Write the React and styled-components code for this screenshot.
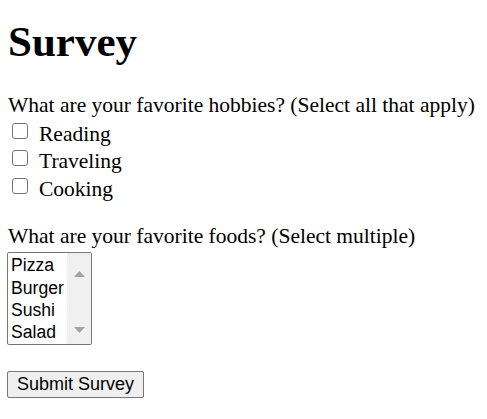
import React from 'react';
import styled, { createGlobalStyle } from 'styled-components';

const GlobalStyle = createGlobalStyle`
  body {
    margin: 0;
    background: #fff;
    color: #000;
    font-family: "Liberation Serif", "Times New Roman", serif;
    font-size: 21.5px;
  }
`;

const Page = styled.div`
  padding: 0 8px;
`;

const Title = styled.h1`
  font-size: 43px;
  font-weight: bold;
  margin: 16.7px 0 27.7px;
  line-height: normal;
`;

const Form = styled.form`
  display: flex;
  flex-direction: column;
  align-items: flex-start;
`;

const Question = styled.div`
  line-height: normal;
  margin-top: ${(p) => p.$gap || 0}px;
`;

const Options = styled.div`
  margin-top: 3.3px;
`;

const CheckRow = styled.label`
  display: flex;
  align-items: flex-start;
  height: 27.5px;
  line-height: normal;
`;

const Box = styled.input.attrs({ type: 'checkbox' })`
  appearance: none;
  width: 16px;
  height: 16px;
  margin: 1.2px 11px 0 4px;
  border: 1px solid #767676;
  border-radius: 3px;
  background: #fff;
  box-sizing: border-box;
`;

const ListBox = styled.div`
  margin-top: 3.8px;
  width: 85px;
  height: 93px;
  box-sizing: border-box;
  border: 1px solid #767676;
  border-radius: 2px;
  display: flex;
  overflow: hidden;
  margin-left: -1px;
`;

const OptionList = styled.div`
  flex: 1;
  padding-top: 1px;
`;

const Option = styled.div`
  font-family: "Liberation Sans", Arial, sans-serif;
  font-size: 17.6px;
  line-height: 22.3px;
  padding-left: 3px;
  color: #000;
`;

const Scrollbar = styled.div`
  width: 24px;
  background: #f0f0f0;
  display: flex;
  flex-direction: column;
  justify-content: space-between;
  align-items: center;
  padding: 17px 0 10px;
`;

const Button = styled.button`
  margin-top: 26px;
  margin-left: -1px;
  width: 137px;
  height: 27px;
  padding: 0;
  font-family: "Liberation Sans", Arial, sans-serif;
  font-size: 18px;
  color: #000;
  background: #efefef;
  border: 1px solid #767676;
  border-radius: 2px;
`;

const Arrow = ({ down }) => (
  <svg width="11" height="7" viewBox="0 0 11 7">
    <path d={down ? 'M0 0 H11 L5.5 6 Z' : 'M0 7 H11 L5.5 1 Z'} fill="#a3a3a3" />
  </svg>
);

const hobbies = ['Reading', 'Traveling', 'Cooking'];
const foods = ['Pizza', 'Burger', 'Sushi', 'Salad'];

export default function App() {
  return (
    <Page>
      <GlobalStyle />
      <Title>Survey</Title>
      <Form onSubmit={(e) => e.preventDefault()}>
        <Question>What are your favorite hobbies? (Select all that apply)</Question>
        <Options>
          {hobbies.map((h) => (
            <CheckRow key={h}>
              <Box name="hobby" value={h} />
              {h}
            </CheckRow>
          ))}
        </Options>
        <Question $gap={19.5}>What are your favorite foods? (Select multiple)</Question>
        <ListBox role="listbox" aria-multiselectable="true">
          <OptionList>
            {foods.map((f) => (
              <Option key={f} role="option">{f}</Option>
            ))}
          </OptionList>
          <Scrollbar>
            <Arrow />
            <Arrow down />
          </Scrollbar>
        </ListBox>
        <Button type="submit">Submit Survey</Button>
      </Form>
    </Page>
  );
}
